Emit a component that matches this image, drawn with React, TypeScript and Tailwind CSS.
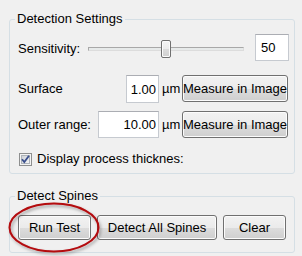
import { type FC } from 'react';

const btn =
  "flex items-center justify-center rounded-[3px] border border-[#707070] bg-[linear-gradient(#f2f2f2_0%,#ebebeb_50%,#dddddd_50%,#cfcfcf_100%)] shadow-[inset_0_0_0_1px_#fcfcfc] text-black whitespace-nowrap";

const field =
  "border border-[#c6cad0] border-t-[#abadb3] bg-white text-[13px] leading-[16px] outline-none font-['Liberation_Sans',Arial,sans-serif]";

const Check: FC = () => (
  <svg width="13" height="13" viewBox="0 0 13 13">
    <defs>
      <linearGradient id="cb" x1="0" y1="0" x2="1" y2="1">
        <stop offset="0" stopColor="#cbcfd5" />
        <stop offset="1" stopColor="#f7f7f7" />
      </linearGradient>
    </defs>
    <rect x="0.5" y="0.5" width="12" height="12" fill="#f4f4f4" stroke="#8e8f8f" />
    <rect x="2.5" y="2.5" width="8" height="8" fill="url(#cb)" stroke="#aeb3b9" />
    <path d="M3 6.2 L5.3 9 L10 2.8" fill="none" stroke="#3a4f8d" strokeWidth="1.8" />
  </svg>
);

const App: FC = () => {
  return (
    <div className="relative h-[256px] w-[302px] overflow-hidden bg-[#f0f0f0] font-['Liberation_Sans',Arial,sans-serif] text-[13px] leading-[16px] text-black">
      <fieldset className="ml-[9px] mt-[11px] w-[286px] rounded-[3px] border border-[#d5dfe5] pb-[6px]">
        <legend className="ml-[5px] px-[2px]">Detection Settings</legend>
        <div className="pl-[8px]">
          <div className="mt-[7px] flex h-[27px] items-center">
            <span className="w-[70px] pt-[2px]">Sensitivity:</span>
            <div className="relative mt-[3px] h-[18px] w-[156px]">
              <div className="absolute left-0 right-0 top-[7px] h-[4px] border border-[#a8a8a8] border-b-[#dcdcdc] border-r-[#dcdcdc] bg-[#e7eaea]" />
              <div className="absolute left-[73px] top-0 h-[18px] w-[10px] rounded-[2px] border border-[#707070] bg-[linear-gradient(#f4f4f4_0%,#ececec_50%,#dcdcdc_50%,#d0d0d0_100%)] shadow-[inset_0_0_0_1px_#fbfbfb]" />
            </div>
            <input readOnly defaultValue="50" className={`${field} ml-[11px] h-[27px] w-[34px] pl-[5px]`} />
          </div>

          <div className="mt-[14px] flex h-[28px] items-start">
            <div className="flex w-[141px] items-center justify-between">
              <span>Surface</span>
              <input readOnly defaultValue="1.00" className={`${field} h-[28px] w-[33px] pr-[2px] text-right`} />
            </div>
            <span className="ml-[3px] w-[20px] self-center">µm</span>
            <div className={`${btn} h-[27px] w-[106px]`}>Measure in Image</div>
          </div>

          <div className="mt-[8px] flex h-[28px] items-start">
            <div className="flex w-[141px] items-center justify-between">
              <span>Outer range:</span>
              <input readOnly defaultValue="10.00" className={`${field} h-[27px] w-[61px] pr-[2px] text-right`} />
            </div>
            <span className="ml-[3px] w-[20px] self-center">µm</span>
            <div className={`${btn} h-[27px] w-[106px]`}>Measure in Image</div>
          </div>

          <div className="mt-[12px] flex h-[16px] items-center">
            <span className="ml-[1px] flex">
              <Check />
            </span>
            <span className="ml-[5px] whitespace-nowrap">Display process thicknes:</span>
          </div>
        </div>
      </fieldset>

      <fieldset className="ml-[9px] mt-[14px] w-[286px] rounded-[3px] border border-[#d5dfe5] pb-[12px]">
        <legend className="ml-[5px] px-[2px]">Detect Spines</legend>
        <div className="mt-[11px] flex pl-[8px]">
          <div className={`${btn} h-[25px] w-[73px]`}>Run Test</div>
          <div className={`${btn} ml-[6px] h-[25px] w-[120px]`}>Detect All Spines</div>
          <div className={`${btn} ml-[6px] h-[25px] w-[63px]`}>Clear</div>
        </div>
      </fieldset>

      {/* red highlight annotation */}
      <svg className="pointer-events-none absolute left-0 top-0" width="302" height="256">
        <defs>
          <filter id="sh" x="-20%" y="-20%" width="140%" height="140%">
            <feDropShadow dx="1.5" dy="2" stdDeviation="1.5" floodColor="#000" floodOpacity="0.35" />
          </filter>
        </defs>
        <ellipse cx="54" cy="227.5" rx="44.5" ry="24" fill="none" stroke="#b3080c" strokeWidth="2" filter="url(#sh)" />
      </svg>
    </div>
  );
};

export default App;
